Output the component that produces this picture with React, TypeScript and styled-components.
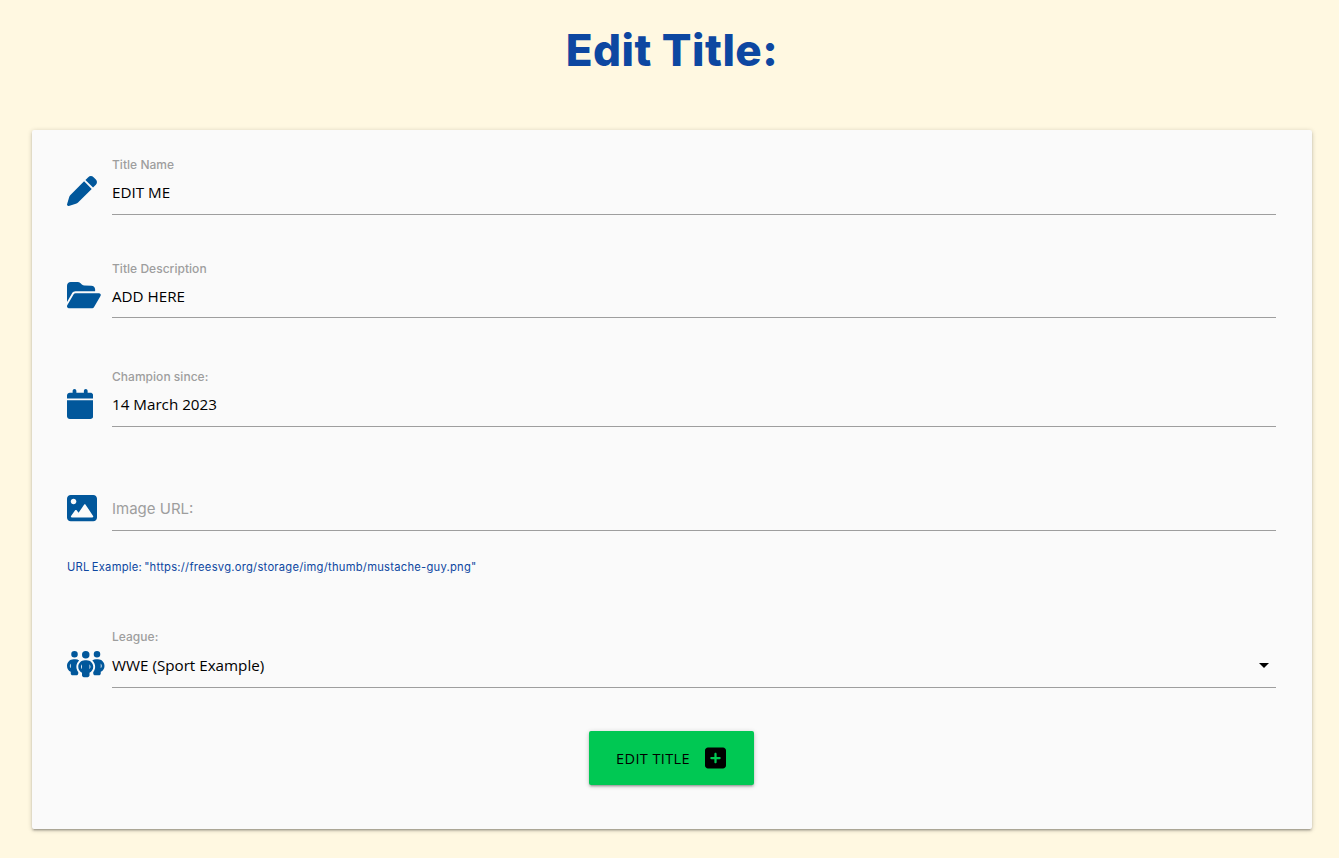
import React from 'react';
import styled, { createGlobalStyle } from 'styled-components';
import { FaPen, FaFolderOpen, FaCalendar, FaPeopleGroup, FaSquarePlus } from 'react-icons/fa6';

const Global = createGlobalStyle`
  * { box-sizing: border-box; }
  body { margin: 0; background: #fff8e1; font-family: "Open Sans", sans-serif; overflow: hidden; }
`;
const Page = styled.main`
  min-height: 858px;
  padding: 0 27px 0 32px;
`;
const Heading = styled.h1`
  margin: 0;
  height: 130px;
  padding-top: 22px;
  text-align: center;
  font: 800 44px/56px Inter, sans-serif;
  letter-spacing: 0.45px;
  color: #0d47a1;
`;
const Card = styled.form`
  height: 699px;
  padding: 25px 36px 0 35px;
  background: #fafafa;
  border-radius: 2px;
  box-shadow: 0 2px 2px 0 rgba(0,0,0,.14), 0 3px 1px -2px rgba(0,0,0,.12), 0 1px 5px 0 rgba(0,0,0,.2);
`;
const Row = styled.div<{ $gap: number }>`
  display: grid;
  grid-template-columns: 45px 1fr;
  height: 60px;
  margin-bottom: ${p => p.$gap}px;
`;
const IconSlot = styled.span<{ $drop?: number; $width?: number }>`
  display: flex;
  align-items: center;
  height: 30px;
  margin-top: ${p => 21 + (p.$drop ?? 0)}px;
  color: #01579b;
  svg { flex: none; width: ${p => p.$width ?? 30}px; height: 30px; }
`;
const Field = styled.div`
  display: flex;
  flex-direction: column;
  border-bottom: 1px solid #9e9e9e;
`;
const Label = styled.label<{ $line?: number }>`
  height: 20px;
  font: 450 12px/${p => p.$line ?? 20}px Inter, sans-serif;
  letter-spacing: 0.03px;
  color: #9e9e9e;
`;
const Value = styled.div<{ $empty?: boolean; $height?: number }>`
  display: flex;
  align-items: center;
  justify-content: space-between;
  height: ${p => p.$height ?? 34}px;
  padding-right: 7px;
  font: 400 ${p => p.$empty ? '15px Inter' : '15.2px "Open Sans"'}, sans-serif;
  color: ${p => p.$empty ? '#9e9e9e' : '#000'};
`;
const Hint = styled.p`
  margin: 0 0 51px;
  height: 20px;
  font: 400 11.2px/20px Inter, sans-serif;
  letter-spacing: 0.26px;
  word-spacing: -1.3px;
  color: #0d47a1;
`;
const Submit = styled.button`
  display: flex;
  align-items: center;
  justify-content: space-between;
  width: 165px;
  height: 54px;
  margin: 0 auto;
  padding: 0 28px 0 27px;
  border: 0;
  border-radius: 2px;
  background: #00c853;
  color: #000;
  font: 400 14.5px "Open Sans", sans-serif;
  letter-spacing: 0.4px;
  white-space: nowrap;
  box-shadow: 0 2px 2px 0 rgba(0,0,0,.14), 0 3px 1px -2px rgba(0,0,0,.12), 0 1px 5px 0 rgba(0,0,0,.2);
  svg { flex: none; width: 21px; height: 24px; }
`;
const Caret = styled.i`
  margin-top: 1px;
  border: 5px solid transparent;
  border-top-color: #000;
  border-bottom: 0;
`;

const PictureIcon = () => (
  <svg viewBox="0 0 512 512" fill="currentColor" aria-hidden="true">
    <path d="M448 32H64C28.65 32 0 60.65 0 96v320c0 35.35 28.65 64 64 64h384c35.35 0 64-28.65 64-64V96c0-35.35-28.65-64-64-64zM112 96c26.51 0 48 21.49 48 48s-21.49 48-48 48-48-21.49-48-48 21.49-48 48-48zM446.1 407.6C443.3 412.8 437.9 416 432 416H82c-6 0-11.5-3.4-14.2-8.8-2.7-5.3-2.2-11.8 1.3-16.6l70-96c3-4.2 7.8-6.6 12.9-6.6s9.9 2.4 12.9 6.6l32.5 44.5 93.3-140c3-4.4 8-7.1 13.3-7.1s10.3 2.7 13.3 7.1l128 192c3.3 4.9 3.6 11.2.8 16.5z" />
  </svg>
);

export default function App() {
  return (
    <>
      <Global />
      <Page>
        <Heading>Edit Title:</Heading>
        <Card>
          <Row $gap={43}>
            <IconSlot><FaPen /></IconSlot>
            <Field><Label>Title Name</Label><Value>EDIT ME</Value></Field>
          </Row>
          <Row $gap={49}>
            <IconSlot $drop={1} $width={33.75}><FaFolderOpen /></IconSlot>
            <Field><Label $line={22}>Title Description</Label><Value $height={35}>ADD HERE</Value></Field>
          </Row>
          <Row $gap={44}>
            <IconSlot $drop={1} $width={26.25}><FaCalendar /></IconSlot>
            <Field><Label>Champion since:</Label><Value>14 March 2023</Value></Field>
          </Row>
          <Row $gap={26}>
            <IconSlot $drop={1}><PictureIcon /></IconSlot>
            <Field><Label /><Value $empty>Image URL:</Value></Field>
          </Row>
          <Hint>URL Example: "https://freesvg.org/storage/img/thumb/mustache-guy.png"</Hint>
          <Row $gap={43}>
            <IconSlot $width={37.5}><FaPeopleGroup /></IconSlot>
            <Field><Label $line={18}>League:</Label><Value>WWE (Sport Example)<Caret /></Value></Field>
          </Row>
          <Submit type="button">EDIT TITLE<FaSquarePlus /></Submit>
        </Card>
      </Page>
    </>
  );
}
